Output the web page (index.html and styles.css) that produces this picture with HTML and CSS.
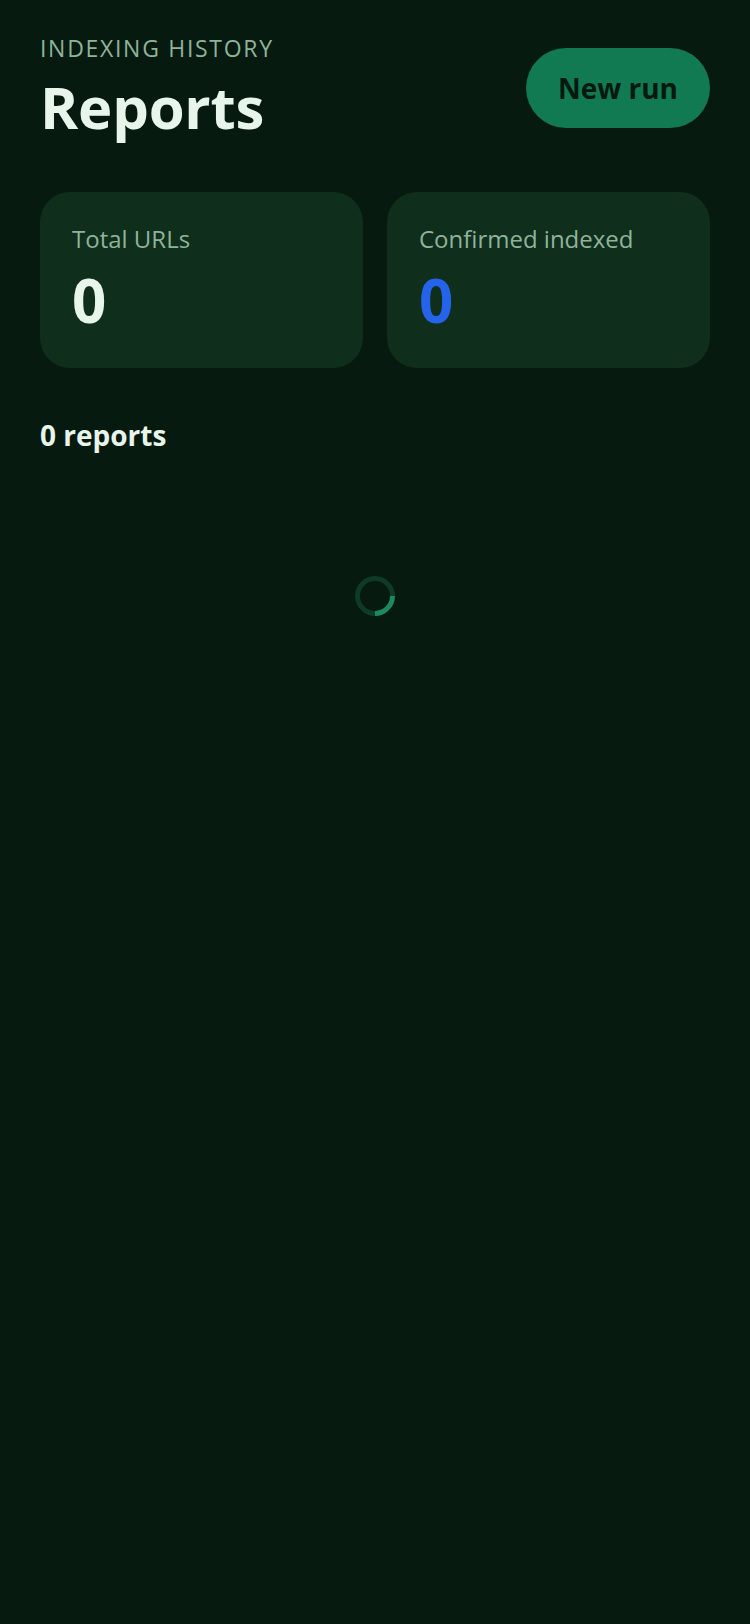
FILE: index.html
```html
<!DOCTYPE html>
<html lang="en">
<head>
  <meta charset="UTF-8">
  <title>Reports</title>
  <link rel="stylesheet" href="styles.css">
</head>
<body>
  <div class="page">
    <header class="top">
      <div class="titles">
        <div class="overline">INDEXING HISTORY</div>
        <h1>Reports</h1>
      </div>
      <button class="new-run">New run</button>
    </header>

    <div class="stats">
      <div class="stat">
        <div class="stat-label">Total URLs</div>
        <div class="stat-value">0</div>
      </div>
      <div class="stat">
        <div class="stat-label">Confirmed indexed</div>
        <div class="stat-value blue">0</div>
      </div>
    </div>

    <div class="count">0 reports</div>

    <div class="loading">
      <div class="spinner"></div>
    </div>
  </div>
</body>
</html>
```

FILE: styles.css
```css
html, body { background: #061a10; }
body { margin: 0; font-family: 'Open Sans', 'Noto Sans', sans-serif; color: #e8f5ea; }
.page { padding: 33px 40px; }

.top { display: flex; justify-content: space-between; align-items: flex-start; }
.overline { font-size: 23px; letter-spacing: 1.7px; color: #8fb39a; line-height: 1.36; }
h1 { margin: 4px 0 0 0; font-size: 58px; font-weight: 700; line-height: 1.36; color: #e8f5ea; letter-spacing: -0.2px; }
.new-run {
  margin-top: 15px;
  width: 184px;
  height: 80px;
  border: none;
  border-radius: 40px;
  background: #127a52;
  color: #06190f;
  font-family: inherit;
  font-size: 28px;
  font-weight: 700;
  cursor: pointer;
}

.stats { display: grid; grid-template-columns: 1fr 1fr; gap: 24px; margin-top: 45px; }
.stat {
  background: #0f2e1c;
  border-radius: 30px;
  height: 176px;
  box-sizing: border-box;
  padding: 30px 32px;
}
.stat-label { font-size: 24px; color: #8fb39a; line-height: 1.4; }
.stat-value { font-size: 60px; font-weight: 700; line-height: 1.2; color: #e8f5ea; margin-top: 8px; }
.stat-value.blue { color: #2563eb; }

.count { margin-top: 48px; font-size: 28px; font-weight: 700; color: #e8f5ea; }

.loading { display: flex; justify-content: center; padding-top: 122px; }
.spinner {
  width: 30px;
  height: 30px;
  border: 5px solid #0e3b27;
  border-right-color: #1b8a5e;
  border-radius: 50%;
  transform: rotate(45deg);
}
```
